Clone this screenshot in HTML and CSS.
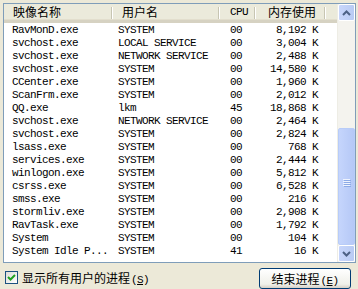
FILE: index.html
```html
<!DOCTYPE html>
<html lang="zh-CN">
	<head>
		<meta charset="UTF-8">
		<title>任务管理器 - 进程</title>
		<link rel="stylesheet" href="styles.css">
	</head>
	<body>
		<div id="processList">
			<div class="table">
				<div class="head">
					<div class="col name"><span>映像名称</span></div>
					<div class="col user"><span>用户名</span></div>
					<div class="col cpu"><span class="mono">CPU</span></div>
					<div class="col mem"><span>内存使用</span></div>
					<div class="col rest"></div>
				</div>
				<div class="rows">
					<div class="row"><span>RavMonD.exe</span><span>SYSTEM</span><span>00</span><span>8,192 K</span></div>
					<div class="row"><span>svchost.exe</span><span>LOCAL SERVICE</span><span>00</span><span>3,004 K</span></div>
					<div class="row"><span>svchost.exe</span><span>NETWORK SERVICE</span><span>00</span><span>2,488 K</span></div>
					<div class="row"><span>svchost.exe</span><span>SYSTEM</span><span>00</span><span>14,580 K</span></div>
					<div class="row"><span>CCenter.exe</span><span>SYSTEM</span><span>00</span><span>1,960 K</span></div>
					<div class="row"><span>ScanFrm.exe</span><span>SYSTEM</span><span>00</span><span>2,012 K</span></div>
					<div class="row"><span>QQ.exe</span><span>lkm</span><span>45</span><span>18,868 K</span></div>
					<div class="row"><span>svchost.exe</span><span>NETWORK SERVICE</span><span>00</span><span>2,464 K</span></div>
					<div class="row"><span>svchost.exe</span><span>SYSTEM</span><span>00</span><span>2,824 K</span></div>
					<div class="row"><span>lsass.exe</span><span>SYSTEM</span><span>00</span><span>768 K</span></div>
					<div class="row"><span>services.exe</span><span>SYSTEM</span><span>00</span><span>2,444 K</span></div>
					<div class="row"><span>winlogon.exe</span><span>SYSTEM</span><span>00</span><span>5,812 K</span></div>
					<div class="row"><span>csrss.exe</span><span>SYSTEM</span><span>00</span><span>6,528 K</span></div>
					<div class="row"><span>smss.exe</span><span>SYSTEM</span><span>00</span><span>216 K</span></div>
					<div class="row"><span>stormliv.exe</span><span>SYSTEM</span><span>00</span><span>2,908 K</span></div>
					<div class="row"><span>RavTask.exe</span><span>SYSTEM</span><span>00</span><span>1,792 K</span></div>
					<div class="row"><span>System</span><span>SYSTEM</span><span>00</span><span>104 K</span></div>
					<div class="row"><span>System Idle P...</span><span>SYSTEM</span><span>41</span><span>16 K</span></div>
				</div>
			</div>
			<div class="scrollbar">
				<div class="sbtn">
					<svg width="9" height="6" viewBox="0 0 9 6"><path d="M1 5 L4.5 1.5 L8 5" fill="none" stroke="#4d6185" stroke-width="2"/></svg>
				</div>
				<div class="track">
					<div class="thumb">
						<div class="grip"><i></i><i></i><i></i><i></i></div>
					</div>
				</div>
				<div class="sbtn">
					<svg width="9" height="6" viewBox="0 0 9 6"><path d="M1 1 L4.5 4.5 L8 1" fill="none" stroke="#4d6185" stroke-width="2"/></svg>
				</div>
			</div>
		</div>

		<div class="footer">
			<label class="check">
				<span class="box">
					<svg width="9" height="9" viewBox="0 0 9 9"><path d="M1 4 L3.5 6.5 L8 2" fill="none" stroke="#21a121" stroke-width="2"/></svg>
				</span>
				<span>显示所有用户的进程<span class="key">(<u>S</u>)</span></span>
			</label>
			<div class="button">结束进程<span class="key">(<u>E</u>)</span></div>
		</div>
	</body>
</html>
```
FILE: styles.css
```css
body{
	margin:0;
	padding:0;
	width:358px;
	height:289px;
	overflow:hidden;
	background:#ece9d8;
	font-family:"Noto Sans CJK SC",sans-serif;
	font-size:12px;
	color:#000;
}

.mono{
	font-family:"Liberation Mono",monospace;
	font-size:11px;
	letter-spacing:-0.6px;
}

#processList{
	display:flex;
	margin:3px 0 0 3px;
	width:351px;
	height:258px;
	border:1px solid #7f9db9;
	background:#fff;
}

.table{
	flex:1;
	display:flex;
	flex-direction:column;
}

/* header */
.head{
	display:grid;
	grid-template-columns:108px 107px 36px 70px 1fr;
	height:16px;
	background:#ebeadb;
	border-bottom:3px solid #d6d2c2;
	box-shadow:inset 0 -1px 0 #e2decd;
}
.head .col{
	display:flex;
	align-items:center;
	line-height:16px;
	position:relative;
}
.head .col::after{
	content:"";
	position:absolute;
	right:0;
	top:3px;
	bottom:1px;
	width:1px;
	background:#c7c5b2;
	box-shadow:1px 0 0 #fff;
}
.head .rest::after{
	display:none;
}
.head .name{padding-left:9px;}
.head .user{padding-left:10px;}
.head .cpu{padding-left:11px;}
.head .mem{justify-content:flex-end;padding-right:9px;}

/* rows */
.rows{
	padding-top:1px;
}
.row{
	display:grid;
	grid-template-columns:108px 107px 36px 63px;
	height:13px;
	line-height:13px;
	font-family:"Liberation Mono",monospace;
	font-size:11px;
	letter-spacing:-0.6px;
	white-space:pre;
}
.row span:nth-child(1){padding-left:8px;}
.row span:nth-child(2){padding-left:6px;}
.row span:nth-child(3){padding-left:11px;}
.row span:nth-child(4){text-align:right;}

/* scrollbar */
.scrollbar{
	width:17px;
	display:flex;
	flex-direction:column;
	background:#f4f3ee;
	border-left:1px solid #eeede5;
}
.sbtn{
	height:15px;
	border:1px solid #fff;
	border-radius:2px;
	background:linear-gradient(to right,#c8d6fb,#b9cbf3);
	display:flex;
	align-items:center;
	justify-content:center;
}
.track{
	flex:1;
	display:flex;
	flex-direction:column;
	justify-content:flex-end;
}
.thumb{
	height:115px;
	border:1px solid #b8ccf8;
	border-radius:2px;
	background:linear-gradient(to right,#c5d5fc,#b5c8f6);
	display:flex;
	align-items:center;
	justify-content:center;
}
.grip{
	display:flex;
	flex-direction:column;
	gap:1px;
	margin-top:-8px;
}
.grip i{
	display:block;
	width:7px;
	height:1px;
	background:#eef3fe;
	box-shadow:1px 1px 0 #8caae6;
}

/* footer */
.footer{
	display:flex;
	justify-content:space-between;
	align-items:flex-start;
	padding:4px 7px 0 5px;
}
.check{
	display:flex;
	align-items:center;
	gap:4px;
	margin-top:2px;
}
.box{
	width:11px;
	height:11px;
	border:1px solid #1c5180;
	background:linear-gradient(135deg,#dcdcd7,#fff);
	display:flex;
	align-items:center;
	justify-content:center;
}
.key{
	font-family:"Liberation Mono",monospace;
	font-size:11px;
	letter-spacing:-0.6px;
	margin-left:1px;
}
.button{
	width:90px;
	height:19px;
	line-height:19px;
	margin-top:1px;
	text-align:center;
	border:1px solid #003c74;
	border-radius:3px;
	background:linear-gradient(to bottom,#fff,#f0f0ea 80%,#d6d0c5);
}
```
